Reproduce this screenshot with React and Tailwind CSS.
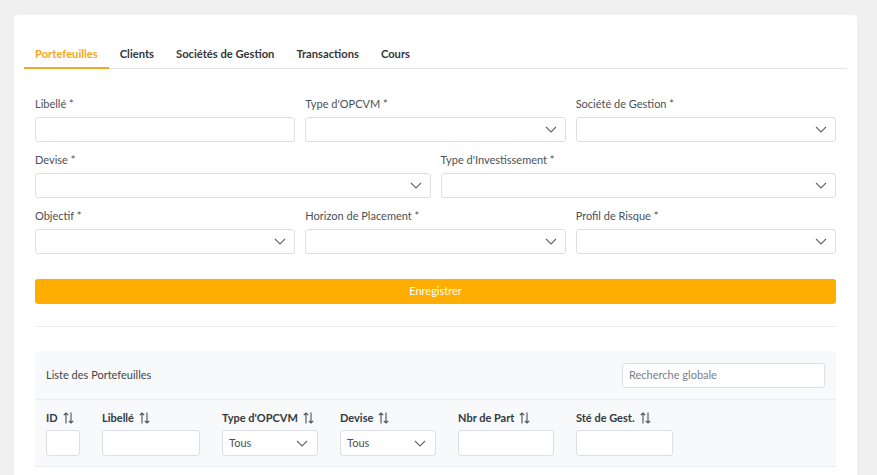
import React from "react";

const tabs = ["Portefeuilles", "Clients", "Sociétés de Gestion", "Transactions", "Cours"];

function Chevron() {
  return (
    <svg width="12" height="7" viewBox="0 0 12 7" fill="none" className="shrink-0">
      <path d="M1 1l5 5 5-5" stroke="#5f666d" strokeWidth="1.1" />
    </svg>
  );
}

function SortIcon() {
  return (
    <svg width="11" height="12" viewBox="0 0 11 12" fill="none" className="ml-[5px] inline-block shrink-0">
      <path d="M3 11.5V1M0.8 3.2L3 1l2.2 2.2" stroke="#495057" strokeWidth="1.1" />
      <path d="M8 0.5V11M5.8 8.8L8 11l2.2-2.2" stroke="#495057" strokeWidth="1.1" />
    </svg>
  );
}

function Field({ label, select }) {
  return (
    <div className="flex flex-col">
      <label className="text-[11px] leading-[18px] text-[#4b5157] mb-[4px]">{label} *</label>
      <div className="h-[25px] bg-white border border-[#dcdfe3] rounded-[3px] flex items-center justify-end pr-[8px]">
        {select && <Chevron />}
      </div>
    </div>
  );
}

function FilterBox({ w, tous }) {
  return (
    <div
      className={`h-[26px] bg-white border border-[#dcdfe3] rounded-[3px] flex items-center justify-between pl-[6px] pr-[9px] text-[11px] text-[#495057] ${w}`}
    >
      {tous && <span>Tous</span>}
      {tous && <Chevron />}
    </div>
  );
}

const cols = [
  { title: "ID", w: "w-[34px]" },
  { title: "Libellé", w: "w-[98px]" },
  { title: "Type d'OPCVM", w: "w-[96px]", tous: true },
  { title: "Devise", w: "w-[96px]", tous: true },
  { title: "Nbr de Part", w: "w-[96px]" },
  { title: "Sté de Gest.", w: "w-[97px]" },
];

export default function App() {
  return (
    <div className="min-h-screen bg-[#f0f0f0] pl-[14px] pr-[20px] pt-[15px] font-['Lato',sans-serif]">
      <div className="bg-white rounded-[4px] px-[10px] pt-[19px] pb-[20px]">
        <div className="flex border-b border-[#e2e4e6]">
          {tabs.map((t, i) => (
            <div
              key={t}
              className={`px-[11px] pt-[11px] pb-[4px] text-[11.2px] leading-[18px] font-bold -mb-px ${
                i === 0 ? "text-[#f6a722] border-b-2 border-[#f6a722]" : "text-[#33373b] border-b-2 border-transparent"
              }`}
            >
              {t}
            </div>
          ))}
        </div>

        <div className="px-[11px] pt-[26px]">
          <div className="grid grid-cols-3 gap-x-[10px] mb-[9px]">
            <div className="flex flex-col">
              <label className="text-[11px] leading-[18px] text-[#4b5157] mb-[4px]">Libellé *</label>
              <div className="h-[25px] bg-white border border-[#dcdfe3] rounded-[3px]" />
            </div>
            <Field label="Type d'OPCVM" select />
            <Field label="Société de Gestion" select />
          </div>
          <div className="grid grid-cols-2 gap-x-[10px] mb-[9px]">
            <Field label="Devise" select />
            <Field label="Type d'Investissement" select />
          </div>
          <div className="grid grid-cols-3 gap-x-[10px]">
            <Field label="Objectif" select />
            <Field label="Horizon de Placement" select />
            <Field label="Profil de Risque" select />
          </div>

          <button className="mt-[25px] w-full h-[25px] bg-[#ffad00] rounded-[3px] text-white text-[11px]">
            Enregistrer
          </button>

          <div className="mt-[22px] border-t border-[#e9ecef]" />

          <div className="mt-[24px] bg-[#f8f9fa] border-b border-[#e9ecef]">
            <div className="flex items-center justify-between px-[11px] pt-[12px] pb-[11px] border-b border-[#e9ecef]">
              <span className="text-[11px] text-[#3f454b]">Liste des Portefeuilles</span>
              <div className="w-[203px] h-[25px] bg-white border border-[#dcdfe3] rounded-[3px] flex items-center px-[6px] text-[11px] text-[#7a8087]">
                Recherche globale
              </div>
            </div>
            <div className="flex gap-[22px] pl-[11px] pt-[9px] pb-[10px]">
              {cols.map((c) => (
                <div key={c.title} className={`flex flex-col ${c.w}`}>
                  <div className="text-[11px] leading-[18px] font-bold text-[#343a40] mb-[3px] whitespace-nowrap flex items-center">
                    {c.title}
                    <SortIcon />
                  </div>
                  <FilterBox w={c.w} tous={c.tous} />
                </div>
              ))}
            </div>
          </div>
        </div>
      </div>
    </div>
  );
}
